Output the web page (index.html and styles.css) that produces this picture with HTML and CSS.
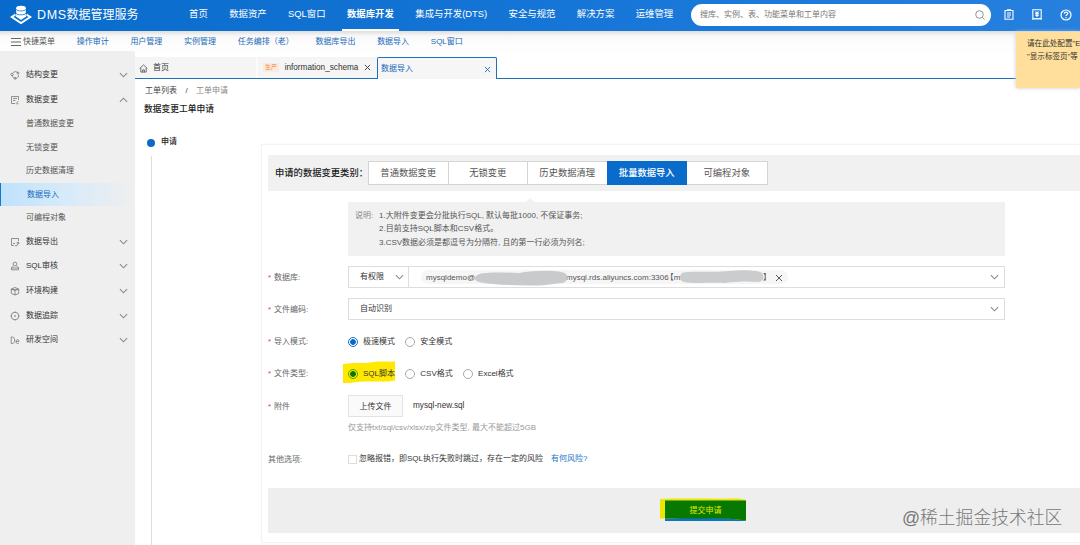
FILE: index.html
```html
<!DOCTYPE html>
<html lang="zh-CN">
<head>
<meta charset="utf-8">
<title>DMS数据管理服务</title>
<link rel="stylesheet" href="styles.css">
</head>
<body>
<svg class="defs" width="0" height="0">
  <symbol id="chev" viewBox="0 0 10 6"><path d="M1 1l4 4 4-4" fill="none" stroke="currentColor" stroke-width="1.200"/></symbol>
  <symbol id="close" viewBox="0 0 8 8"><path d="M1 1l6 6M7 1L1 7" fill="none" stroke="currentColor"/></symbol>
</svg>
<div class="app">
  <header class="top">
    <div class="brand">
      <svg class="logo" viewBox="0 0 22 20" width="22" height="20">
        <path d="M5.500 9.500L1.800 12 11 18l9.200-6-3.700-2.500" fill="none" stroke="#fff" stroke-width="2"/>
        <path d="M5.500 11.300L11 15l5.500-3.700-1.500-1H7z" fill="#fff"/>
        <path d="M6.200 3v7.500c0 3 9.600 3 9.600 0V3z" fill="#fff"/>
        <ellipse cx="11" cy="3" rx="4.800" ry="2.300" fill="#fff"/>
        <path d="M6.200 4.300c1 2.200 8.600 2.200 9.600 0M6.200 8.200c1 2.200 8.600 2.200 9.600 0" fill="none" stroke="#0f6fce" stroke-width=".8"/>
      </svg>
      <span class="brand-text"><span class="dms">DMS</span>数据管理服务</span>
    </div>
    <nav class="nav">
      <span>首页</span><span>数据资产</span><span>SQL窗口</span><span class="on">数据库开发</span><span>集成与开发(DTS)</span><span>安全与规范</span><span>解决方案</span><span>运维管理</span>
    </nav>
    <div class="search"><span>搜库、实例、表、功能菜单和工单内容</span>
      <svg viewBox="0 0 10 10" width="10" height="10"><circle cx="4.500" cy="4.500" r="3.800" fill="none" stroke="#777" stroke-width=".8"/><path d="M7.300 7.300L9.500 9.500" stroke="#777" stroke-width=".8"/></svg>
    </div>
    <div class="tools">
      <svg viewBox="0 0 10 11" width="10" height="11"><path d="M1 1.500h8v8.700H1zM3 .9h4M3 4h4M3 6h4M3 8h3" fill="none" stroke="#fff" stroke-width="1.100"/></svg>
      <svg viewBox="0 0 10 11" width="10" height="11"><path d="M.8.800h8.400v9.400L8 9.500l-1 .7-1-.7-1 .7-1-.7-1 .7-1-.7-1.200.7z" fill="none" stroke="#fff" stroke-width="1.100"/><path d="M3.500 2.500L5 4.500l1.500-2M5 4.500v3.500M3.300 4.700h3.400M3.300 6.300h3.400" fill="none" stroke="#fff" stroke-width="1.200"/></svg>
      <svg viewBox="0 0 12 12" width="12" height="12"><circle cx="6" cy="6" r="5" fill="none" stroke="#fff" stroke-width="1.200"/><path d="M4.300 4.800c0-2.300 3.500-2.200 3.500-.2C7.800 5.800 6 5.800 6 7.100M6 8v1.200" fill="none" stroke="#fff" stroke-width="1.200"/></svg>
    </div>
  </header>
  <div class="quick">
    <span class="menu"><svg viewBox="0 0 10 8" width="10" height="8"><path d="M0 .5h10M0 4h10M0 7.500h10" stroke="#555" stroke-width=".9"/></svg>快捷菜单</span>
    <a>操作审计</a><a>用户管理</a><a>实例管理</a><a>任务编排（老）</a><a>数据库导出</a><a>数据导入</a><a>SQL窗口</a>
  </div>
  <div class="body">
    <aside class="side">
      <div class="item"><svg class="ico" viewBox="0 0 10 10"><path d="M2.500 3.500C3.500 1.200 7 1 8 3.200M8.500 5c.2 2-1.500 3.700-3.500 3.500M3.800 7.800C2.800 7.200 2.300 6.200 2.200 5.500"/><circle cx="2" cy="4.500" r="1.200"/><circle cx="8" cy="3" r="1"/><circle cx="5" cy="8.300" r="1"/></svg><span>结构变更</span><svg class="arr"><use href="#chev"/></svg></div>
      <div class="item"><svg class="ico" viewBox="0 0 10 10"><path d="M8.500 5V1.500h-7v7H5M3 3.500h4M3 5.500h2.500M6 8.500l2.500-2.500M6.500 8.800h2"/></svg><span>数据变更</span><svg class="arr up"><use href="#chev"/></svg></div>
      <div class="sub">普通数据变更</div>
      <div class="sub">无锁变更</div>
      <div class="sub">历史数据清理</div>
      <div class="sub on">数据导入</div>
      <div class="sub">可编程对象</div>
      <div class="item"><svg class="ico" viewBox="0 0 10 10"><path d="M8.500 4V1.500h-7v7H4M3 6.500h2M5 8.700h2L8.500 5.500M6.500 6L8.500 5l.5 2"/></svg><span>数据导出</span><svg class="arr"><use href="#chev"/></svg></div>
      <div class="item"><svg class="ico" viewBox="0 0 10 10"><circle cx="5" cy="3" r="1.900"/><path d="M3.500 5.200L1.500 6.500v2.300h7V6.500l-2-1.300M1.500 7h7"/></svg><span>SQL审核</span><svg class="arr"><use href="#chev"/></svg></div>
      <div class="item"><svg class="ico" viewBox="0 0 10 10"><path d="M1.300 3L5 1.500 8.700 3v4.500L5 9 1.300 7.500zM1.300 3L5 4.300 8.700 3M5 4.300V9M1.500 3.700h7"/></svg><span>环境构建</span><svg class="arr"><use href="#chev"/></svg></div>
      <div class="item"><svg class="ico" viewBox="0 0 10 10"><circle cx="5" cy="5" r="3.800"/><path d="M4.300 5h1.400M5 4.300v1.400M5 .5v1.300M5 8.200v1.300M.5 5h1.300M8.200 5h1.300"/></svg><span>数据追踪</span><svg class="arr"><use href="#chev"/></svg></div>
      <div class="item"><svg class="ico" viewBox="0 0 10 10"><path d="M1.200 2v6.500h1.300C5.300 8.500 5.300 2 2.500 2zM6 6.500h3C9 4 6 4 6 6.500s2 2.300 3 1.500"/></svg><span>研发空间</span><svg class="arr"><use href="#chev"/></svg></div>
    </aside>
    <main class="main">
      <div class="tabs">
        <div class="tab home"><svg viewBox="0 0 10 10" width="9" height="9"><path d="M.7 5L5 1l4.300 4M2 4.300V9h6V4.300M4 9V6.500h2V9" fill="none" stroke="#555" stroke-width=".9"/></svg><span>首页</span></div>
        <div class="tab schema"><span class="env">生产</span><span class="name">information_schema</span><svg class="x"><use href="#close"/></svg></div>
        <div class="tab cur"><span>数据导入</span><svg class="x"><use href="#close"/></svg></div>
      </div>
      <div class="crumb"><span>工单列表</span><i>/</i><em>工单申请</em></div>
      <h1 class="title">数据变更工单申请</h1>
      <div class="flow">
        <div class="step"><div class="step-head"><b class="dot"></b>申请</div><div class="line"></div></div>
        <section class="card">
          <div class="types">
            <span class="types-label">申请的数据变更类别：</span>
            <div class="seg"><span>普通数据变更</span><span>无锁变更</span><span>历史数据清理</span><span class="on">批量数据导入</span><span>可编程对象</span></div>
          </div>
          <div class="note">
            <svg class="peak" viewBox="0 0 10 5"><path d="M0 5L5 0l5 5z" fill="#f1f1f1"/></svg>
            <span class="note-label">说明:</span>
            <div><p>1.大附件变更会分批执行SQL, 默认每批1000, 不保证事务;</p><p>2.目前支持SQL脚本和CSV格式。</p><p>3.CSV数据必须是都逗号为分隔符, 且的第一行必须为列名;</p></div>
          </div>
          <div class="row"><label><i>*</i>数据库:</label>
            <div class="box db">
              <span class="perm">有权限<svg class="arr"><use href="#chev"/></svg></span>
              <span class="chip"><span class="host">mysqldemo@</span><span class="addr">mysql.rds.aliyuncs.com:3306<span class="open">【</span>m</span><svg class="mask m1" viewBox="0 0 94 16"><path d="M2 6C5 2 20 2 45 3 62 0 88 0 92 4c3 4 1 8-4 9-10 1-18 3-32 2.500C36 15 18 15 5 12 0 11 0 8 2 6z" fill="#c9cacb"/></svg><svg class="mask m2" viewBox="0 0 86 14"><path d="M3 3C8 0 35 3 50 1 65-.5 80 0 84 3c3 4 1 8-3 9-12-1-22-.5-35 1C28 12.500 12 14 5 12 0 11 0 6 3 3z" fill="#cbcccd"/></svg><span class="brk">】</span><svg class="x"><use href="#close"/></svg></span>
              <svg class="arr end"><use href="#chev"/></svg>
            </div></div>
          <div class="row"><label><i>*</i>文件编码:</label><div class="box enc"><span>自动识别</span><svg class="arr end"><use href="#chev"/></svg></div></div>
          <div class="row"><label><i>*</i>导入模式:</label><div class="radios"><span><b class="radio sel"></b>极速模式</span><span><b class="radio"></b>安全模式</span></div></div>
          <div class="row"><label><i>*</i>文件类型:</label><div class="radios"><svg class="mark" viewBox="0 0 54 23"><path d="M1 3C12 1 22 3 32 1 40 0 48 1 53 0.500V19.500C44 22 22 19 8 22 4 22 2 22 1 22z" fill="#ffe900"/></svg><span><b class="radio sel green"></b>SQL脚本</span><span><b class="radio"></b>CSV格式</span><span><b class="radio"></b>Excel格式</span></div></div>
          <div class="row up-row"><label><i>*</i>附件</label><span class="upload">上传文件</span><span class="file">mysql-new.sql</span></div>
          <div class="hint">仅支持txt/sql/csv/xlsx/zip文件类型, 最大不能超过5GB</div>
          <div class="row opt"><label>其他选项:</label><b class="check"></b><span class="ignore">忽略报错，即SQL执行失败时跳过，存在一定的风险</span><a>有何风险?</a></div>
          <div class="foot">
            <div class="submit"><svg class="paint" viewBox="0 0 86 25"><path d="M0 1C25 0 55 1 79 .5L86 2V22.500C60 18 30 20 0 20.500z" fill="#ece600"/><path d="M5 2.500H86V22.500C72 21 60 20 45 20.500H5z" fill="#077800"/></svg><span>提交申请</span></div>
          </div>
        </section>
      </div>
    </main>
  </div>
  <div class="tip"><p>请在此处配置"E</p><p>"显示标签页"等</p></div>
  <div class="wm">@稀土掘金技术社区</div>
</div>
</body>
</html>
```
FILE: styles.css
```css
* { box-sizing: border-box; }
body { margin: 0; font: 8px/12px "Liberation Sans", "Noto Sans CJK SC", sans-serif; color: #333; background: #fff; }
i, em { font-style: normal; }
p { margin: 0; }
.defs { position: absolute; }
.app { position: relative; width: 1080px; height: 545px; overflow: hidden; white-space: nowrap; display: flex; flex-direction: column; }
.arr { width: 9px; height: 6px; color: #888; flex: none; }
.arr.up { transform: rotate(180deg); }
.x { width: 7px; height: 7px; flex: none; }

.top { flex: none; height: 31px; display: flex; background: linear-gradient(90deg, #086bcb, #1877d8 60%, #2780de); color: #fff; padding-left: 10px; }
.brand { display: flex; width: 179px; padding-top: 5px; }
.logo { flex: none; }
.brand-text { font-size: 12px; line-height: 21px; padding-left: 5px; }
.dms { font-size: 12.500px; letter-spacing: .6px; }
.nav { display: flex; gap: 11.400px; width: 502px; margin-left: -5px; font-size: 9.400px; }
.nav span { height: 31px; line-height: 27px; padding: 0 5px; }
.nav .on { font-weight: bold; border-bottom: 2px solid #fff; }
.search { flex: none; width: 300px; height: 22px; margin: 4px 0 0 5px; padding: 0 6px 0 9px; border-radius: 11px; background: #fff; color: #777; display: flex; align-items: center; justify-content: space-between; }
.tools { display: flex; align-items: center; gap: 18px; padding: 0 0 2px 13px; }
.tools svg { flex: none; }

.quick { flex: none; height: 20px; padding: 2px 0 0 11px; display: flex; align-items: center; gap: 21.700px; color: #1669b8; background: linear-gradient(#dedede, #f8f8f8 5px, #fdfdfd 12px); }
.menu { display: flex; align-items: center; gap: 2px; color: #555; }

.body { flex: 1; display: flex; min-height: 0; }
.side { width: 135px; flex: none; background: #efefef; padding-top: 12px; }
.item { height: 24.550px; padding: 0 7px 0 10px; display: flex; align-items: center; }
.item span { flex: 1; padding-left: 6px; }
.ico { width: 10px; height: 10px; fill: none; stroke: #777; stroke-width: .8; }
.sub { height: 23.500px; line-height: 24.500px; padding-left: 26px; color: #555; }
.sub.on { color: #1669bd; padding-left: 27px; background: linear-gradient(90deg, #bfe1fb, #d5eafa 45%, #efefef); box-shadow: inset 1px 0 #1577c9; }

.main { flex: 1; min-width: 0; background: #fff; }
.tabs { height: 28px; padding-top: 6px; display: flex; border-bottom: 1px solid #1d72bb; }
.tab { display: flex; align-items: center; height: 21px; padding-top: 1px; background: #f5f5f5; }
.home { width: 121px; padding-left: 4px; gap: 5px; }
.schema { width: 121px; padding: 0 6px 0 5px; border-left: 2px solid #fbfbfb; justify-content: space-between; }
.env { font-size: 6px; color: #ee884e; background: #fdeadb; padding: 0 2px; line-height: 9px; }
.name { font-size: 8.200px; }
.cur { width: 120px; height: 22px; padding: 1px 5px 0 3px; justify-content: space-between; color: #1669b8; background: #f6f6f6; border: 1px solid #1d72bb; border-bottom: 0; border-radius: 2px 2px 0 0; }
.crumb { display: flex; padding: 6px 0 0 10px; color: #444; }
.crumb i { width: 19px; text-align: center; }
.crumb em { color: #888; }
.title { margin: 6px 0 0 9px; font-size: 8.750px; line-height: 13px; font-weight: 500; color: #222; }

.flow { display: flex; margin-top: 28px; height: 401px; }
.step { width: 126px; padding-left: 12px; margin-top: -8px; flex: none; }
.step-head { display: flex; align-items: center; gap: 6px; height: 11px; font-weight: 500; color: #222; }
.dot { width: 8px; height: 8px; border-radius: 50%; background: #0b6bc6; margin-top: 3px; }
.line { width: 1px; height: 400px; margin: 9px 0 0 4px; background: #ddd; }
.card { flex: 1; height: 399px; min-width: 0; border: 1px solid #f3f3f3; border-right: 0; box-shadow: 0 0 2px #f6f6f6; padding: 10px 0 0 6px; }
.types { height: 36px; display: flex; align-items: center; background: #f1f1f1; padding-left: 7px; font-size: 9.300px; }
.types-label { width: 93px; font-weight: 500; color: #222; }
.seg { display: flex; height: 24px; border: 1px solid #d5d5d5; background: #fff; color: #555; }
.seg span { width: 79.500px; line-height: 22px; text-align: center; border-right: 1px solid #d5d5d5; }
.seg span:last-child { border: 0; }
.seg .on { margin: -1px 0 -1px -1px; width: 80.500px; line-height: 24px; background: #0a6cca; color: #fff; border: 0; font-weight: 500; }
.note { position: relative; margin: 11px 0 0 80px; width: 657px; height: 54px; background: #f1f1f1; padding: 7px 0 0 7px; display: flex; gap: 5px; line-height: 13.400px; color: #555; }
.peak { position: absolute; left: 177px; top: -4px; width: 10px; height: 5px; }
.note-label { width: 19px; color: #888; }
.row { display: flex; align-items: center; height: 22px; margin-top: 10px; }
.row label { width: 80px; flex: none; color: #666; padding-top: 1px; }
.row label i { color: #d8432f; display: inline-block; width: 6px; }
.box { width: 657px; height: 22px; border: 1px solid #ddd; display: flex; align-items: center; }
.perm { width: 60px; height: 20px; padding: 0 4px 0 11px; border-right: 1px solid #ddd; display: flex; align-items: center; justify-content: space-between; }
.chip { position: relative; display: flex; align-items: center; width: 367px; height: 14px; margin-left: 12px; padding: 1px 0 0 5px; border-radius: 7px; background: #f6f6f6; color: #555; }
.host { width: 140px; flex: none; }
.open { margin-left: -3px; }
.brk { position: relative; margin-left: auto; width: 4px; flex: none; }
.chip .x { margin-left: 8px; margin-right: 5px; width: 8px; height: 8px; }
.mask { position: absolute; }
.m1 { left: 53px; top: 0; width: 94px; height: 16px; }
.m2 { left: 258px; top: 0; width: 85px; height: 14px; }
.end { margin: 0 5px 0 auto; }
.enc { padding-left: 11px; }
.radios { position: relative; display: flex; gap: 10.300px; padding-top: 1px; }
.radios span { position: relative; display: flex; align-items: center; gap: 5px; }
.radio { width: 10px; height: 10px; border: 1px solid #aaa; border-radius: 50%; background: #fff; }
.sel { border-color: #1473cd; background: radial-gradient(circle, #0c69c2 2.500px, #fff 3.200px); }
.green { border-color: #5ca000; background: radial-gradient(circle, #077800 2.500px, #ffe900 3.200px); }
.mark { position: absolute; left: -6px; top: -6px; width: 54px; height: 23px; }
.up-row { margin-top: 11px; }
.upload { width: 55px; height: 22px; line-height: 21px; text-align: center; border: 1px solid #e3e3e3; background: #fafafa; }
.file { margin-left: 10px; font-size: 8.200px; }
.hint { margin: 5px 0 0 80px; color: #999; }
.opt { margin-top: 14px; }
.check { width: 9px; height: 9px; border: 1px solid #ddd; }
.ignore { margin-left: 2px; }
.opt a { color: #1673c6; margin-left: 8px; }
.foot { margin-top: 18px; height: 45px; background: #eee; padding: 12px 0 0 397px; }
.submit { position: relative; width: 81px; height: 21px; background: #0875c5; color: #e9e900; text-align: center; line-height: 21px; }
.submit span { position: relative; }
.paint { position: absolute; left: -5px; top: -2px; width: 86px; height: 25px; }

.tip { position: absolute; left: 1016px; top: 32px; width: 64px; height: 56px; padding: 5px 0 0 11px; background: #ffdf9b; box-shadow: 0 0 4px #ccc; line-height: 13px; font-size: 7.600px; }
.wm { position: absolute; left: 902px; top: 505px; font-size: 17.800px; line-height: 26px; font-weight: 300; color: #777; }
```
